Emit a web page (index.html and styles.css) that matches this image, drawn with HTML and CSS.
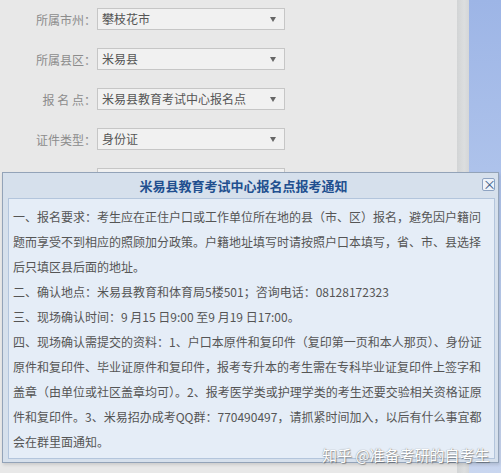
FILE: index.html
```html
<!DOCTYPE html>
<html lang="zh-CN">
<head>
    <meta charset="UTF-8">
    <title>报名点选择</title>
    <link rel="stylesheet" href="styles.css">
</head>
<body>
    <div class="page">
        <div class="form">
            <div class="form-row">
                <label>所属市州：</label>
                <div class="select">攀枝花市</div>
            </div>
            <div class="form-row">
                <label>所属县区：</label>
                <div class="select">米易县</div>
            </div>
            <div class="form-row">
                <label>报 名 点：</label>
                <div class="select">米易县教育考试中心报名点</div>
            </div>
            <div class="form-row">
                <label>证件类型：</label>
                <div class="select">身份证</div>
            </div>
            <div class="form-row">
                <label></label>
                <div class="select"></div>
            </div>
        </div>
        <div class="strip"></div>
        <div class="side"></div>
    </div>

    <!-- notice popup -->
    <div class="dialog">
        <div class="dialog-head">
            <h2>米易县教育考试中心报名点报考通知</h2>
            <span class="close">&times;</span>
        </div>
        <div class="dialog-body">
            <p>一、报名要求：考生应在正住户口或工作单位所在地的县（市、区）报名，避免因户籍问题而享受不到相应的照顾加分政策。户籍地址填写时请按照户口本填写，省、市、县选择后只填区县后面的地址。</p>
            <p>二、确认地点：米易县教育和体育局5楼501；咨询电话：08128172323</p>
            <p>三、现场确认时间：9 月15 日9:00 至9 月19 日17:00。</p>
            <p>四、现场确认需提交的资料：1、户口本原件和复印件（复印第一页和本人那页）、身份证原件和复印件、毕业证原件和复印件，报考专升本的考生需在专科毕业证复印件上签字和盖章（由单位或社区盖章均可）。2、报考医学类或护理学类的考生还要交验相关资格证原件和复印件。3、米易招办成考QQ群：770490497，请抓紧时间加入，以后有什么事宜都会在群里面通知。</p>
        </div>
    </div>

    <div class="watermark">知乎 @准备考研的自考生</div>
</body>
</html>
```

FILE: styles.css
```css
/* General */
body {
    margin: 0;
    background-color: #e8e8e8;
    font-family: "Noto Sans CJK SC", "Noto Sans", sans-serif;
    font-size: 12px;
    overflow: hidden;
}

.page {
    display: flex;
    height: 473px;
}

/* Form */
.form {
    width: 457px;
    padding-top: 8px;
}

.form-row {
    display: flex;
    align-items: center;
    height: 22px;
    margin-bottom: 18px;
}

.form-row label {
    width: 96px;
    margin-right: 1px;
    text-align: right;
    color: #8c8c8c;
    white-space: pre;
}

.select {
    position: relative;
    box-sizing: border-box;
    width: 188px;
    height: 22px;
    line-height: 20px;
    padding-left: 4px;
    border: 1px solid #c6c6c6;
    background-color: #f1f1f1;
    color: #555;
}

.select::after {
    content: "";
    position: absolute;
    right: 8px;
    top: 8px;
    border-left: 3px solid transparent;
    border-right: 3px solid transparent;
    border-top: 5px solid #666;
}

/* Right edge */
.strip {
    width: 12px;
    background: linear-gradient(to right, #d2d4d5, #dcdedf 60%, #d4d6d8);
}

.side {
    flex: 1;
    background: linear-gradient(to bottom, #9db5e6, #b8cbee 60%, #c9d6ef);
}

/* Dialog */
.dialog {
    position: absolute;
    left: 2px;
    top: 172px;
    box-sizing: border-box;
    width: 497px;
    border: 1px solid #93a3b8;
    background-color: #d6e0ec;
    padding: 0 3px 3px 5px;
    box-shadow: 1px 2px 3px rgba(0, 0, 0, 0.12);
}

.dialog-head {
    position: relative;
    height: 25px;
    padding-right: 16px;
    display: flex;
    align-items: center;
    justify-content: center;
}

.dialog-head h2 {
    margin: 0;
    font-size: 13px;
    font-weight: bold;
    color: #214f8f;
}

.close {
    position: absolute;
    right: 0;
    top: 5px;
    box-sizing: border-box;
    width: 13px;
    height: 13px;
    border: 1px solid #8ea3c2;
    border-radius: 2px;
    background-color: #eef3fa;
    color: #3b5a86;
    font-size: 13px;
    line-height: 10px;
    text-align: center;
}

.dialog-body {
    border: 1px solid #b3c5dc;
    background-color: #e5edf7;
    padding: 5px 3px 4px 4px;
    color: #555;
    line-height: 25px;
}

.dialog-body p {
    margin: 0;
    width: 477px;
}

/* Watermark */
.watermark {
    position: absolute;
    left: 322px;
    top: 447px;
    font-size: 15px;
    line-height: 1;
    color: #fff;
    text-shadow: 0 0 1px #777, 1px 1px 1px rgba(0, 0, 0, 0.35);
}
```
